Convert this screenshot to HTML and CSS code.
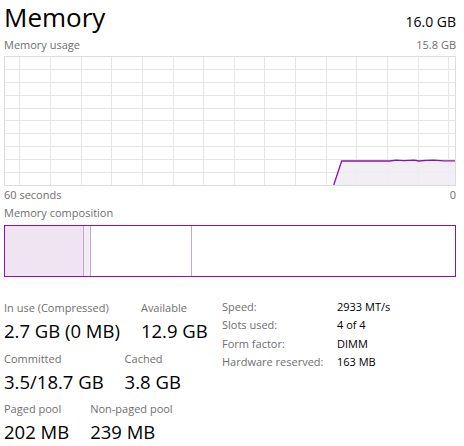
FILE: index.html
```html
<!DOCTYPE html>
<html>
<head>
<meta charset="utf-8">
<link rel="stylesheet" href="styles.css">
</head>
<body>
<div class="pane">
  <div class="header">
    <div class="title">Memory</div>
    <div class="total">16.0 GB</div>
  </div>
  <div class="caption-row cap-top">
    <span>Memory usage</span>
    <span>15.8 GB</span>
  </div>
  <svg class="graph" width="452" height="130" viewBox="0 0 452 130">
    <g class="grid" stroke="#e6e6e6" stroke-width="1" shape-rendering="crispEdges">
      <line x1="15.5" y1="0" x2="15.5" y2="130"/>
      <line x1="46.5" y1="0" x2="46.5" y2="130"/>
      <line x1="77.5" y1="0" x2="77.5" y2="130"/>
      <line x1="107.5" y1="0" x2="107.5" y2="130"/>
      <line x1="138.5" y1="0" x2="138.5" y2="130"/>
      <line x1="169.5" y1="0" x2="169.5" y2="130"/>
      <line x1="199.5" y1="0" x2="199.5" y2="130"/>
      <line x1="230.5" y1="0" x2="230.5" y2="130"/>
      <line x1="260.5" y1="0" x2="260.5" y2="130"/>
      <line x1="291.5" y1="0" x2="291.5" y2="130"/>
      <line x1="322.5" y1="0" x2="322.5" y2="130"/>
      <line x1="352.5" y1="0" x2="352.5" y2="130"/>
      <line x1="383.5" y1="0" x2="383.5" y2="130"/>
      <line x1="414.5" y1="0" x2="414.5" y2="130"/>
      <line x1="444.5" y1="0" x2="444.5" y2="130"/>
      <line x1="0" y1="13.5" x2="452" y2="13.5"/>
      <line x1="0" y1="26.5" x2="452" y2="26.5"/>
      <line x1="0" y1="39.5" x2="452" y2="39.5"/>
      <line x1="0" y1="52.5" x2="452" y2="52.5"/>
      <line x1="0" y1="64.5" x2="452" y2="64.5"/>
      <line x1="0" y1="77.5" x2="452" y2="77.5"/>
      <line x1="0" y1="90.5" x2="452" y2="90.5"/>
      <line x1="0" y1="103.5" x2="452" y2="103.5"/>
      <line x1="0" y1="116.5" x2="452" y2="116.5"/>
    </g>
    <polygon points="329.7,129 337.7,105 386,105 392,104.2 400,104.6 410,104.2 415,105 422,104.3 430,104.2 440,104.8 451,104.8 451,129" fill="#f0ecf2" fill-opacity="0.85"/>
    <polyline points="329.7,129 337.7,105 386,105 392,104.2 400,104.6 410,104.2 415,105 422,104.3 430,104.2 440,104.8 451,104.8" fill="none" stroke="#8b12ae" stroke-width="1.3"/>
    <rect x="0.5" y="0.5" width="451" height="128.5" fill="none" stroke="#dcdcdc" stroke-width="1" shape-rendering="crispEdges"/>
  </svg>
  <div class="caption-row cap-axis">
    <span>60 seconds</span>
    <span>0</span>
  </div>
  <div class="caption-row cap-comp">
    <span>Memory composition</span>
  </div>
  <div class="composition">
    <div class="seg seg-inuse" style="width:78px"></div>
    <div class="seg seg-modified" style="width:6px"></div>
    <div class="seg seg-standby" style="width:100px"></div>
    <div class="seg seg-free"></div>
  </div>
  <div class="stats">
    <div class="stats-left">
      <div class="stat-row">
        <div class="stat"><div class="label">In use (Compressed)</div><div class="value">2.7 GB (0 MB)</div></div>
        <div class="stat"><div class="label">Available</div><div class="value">12.9 GB</div></div>
      </div>
      <div class="stat-row">
        <div class="stat"><div class="label">Committed</div><div class="value">3.5/18.7 GB</div></div>
        <div class="stat"><div class="label">Cached</div><div class="value">3.8 GB</div></div>
      </div>
      <div class="stat-row">
        <div class="stat"><div class="label">Paged pool</div><div class="value">202 MB</div></div>
        <div class="stat"><div class="label">Non-paged pool</div><div class="value">239 MB</div></div>
      </div>
    </div>
    <div class="props">
      <div class="prop-label">Speed:</div><div class="prop-value">2933 MT/s</div>
      <div class="prop-label">Slots used:</div><div class="prop-value">4 of 4</div>
      <div class="prop-label">Form factor:</div><div class="prop-value">DIMM</div>
      <div class="prop-label">Hardware reserved:</div><div class="prop-value">163 MB</div>
    </div>
  </div>
</div>
</body>
</html>
```
FILE: styles.css
```css
html, body {
  margin: 0;
  padding: 0;
  background: #ffffff;
}

body {
  font-family: "Segoe UI", "Open Sans", "Noto Sans", sans-serif;
  color: #000000;
  width: 464px;
  height: 446px;
  overflow: hidden;
}

.pane {
  padding: 0 8px 0 4px;
}

.header {
  display: flex;
  justify-content: space-between;
  align-items: baseline;
  height: 34px;
}

.title {
  font-size: 26px;
  line-height: 34px;
  color: #000;
}

.total {
  font-size: 14px;
  line-height: 34px;
  color: #000;
}

.caption-row {
  display: flex;
  justify-content: space-between;
  font-size: 11px;
  color: #6f6f6f;
}

.cap-top {
  height: 22px;
  line-height: 22px;
}

.graph {
  display: block;
}

.cap-axis {
  height: 15px;
  line-height: 15px;
  margin-top: 1px;
}

.cap-comp {
  height: 22px;
  line-height: 22px;
}

.composition {
  margin-top: 1px;
  height: 50px;
  border: 1px solid #8b12ae;
  display: flex;
}

.seg {
  height: 100%;
}

.seg-inuse {
  background: #eee4f2;
  border-right: 1px solid #cba3d8;
}

.seg-modified {
  background: #f3ecf5;
  border-right: 1px solid #cba3d8;
}

.seg-standby {
  background: #ffffff;
  border-right: 1px solid #cba3d8;
}

.seg-free {
  flex: 1;
  background: #ffffff;
}

.stats {
  display: flex;
  margin-top: 23px;
}

.stats-left {
  flex: 0 0 218px;
  display: flex;
  flex-direction: column;
  gap: 4.5px;
}

.stat-row {
  display: flex;
  gap: 21px;
}

.label {
  font-size: 11px;
  line-height: 16px;
  color: #6f6f6f;
  white-space: nowrap;
}

.value {
  font-size: 18.5px;
  line-height: 30px;
  color: #000;
  white-space: nowrap;
}

.props {
  display: grid;
  grid-template-columns: 115px auto;
  grid-auto-rows: 18.3px;
  margin-top: -2px;
  font-size: 11px;
  line-height: 18.3px;
  align-self: flex-start;
}

.prop-label {
  color: #6f6f6f;
  white-space: nowrap;
}

.prop-value {
  color: #000;
  white-space: nowrap;
}
```
